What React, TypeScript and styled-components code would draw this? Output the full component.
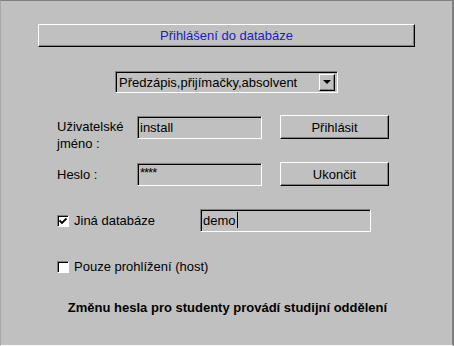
import React from "react";
import styled, { createGlobalStyle, css } from "styled-components";

const GlobalStyle = createGlobalStyle`
  html, body {
    margin: 0;
    padding: 0;
    background: #c0c0c0;
  }
  body {
    font-family: "Liberation Sans", Arial, sans-serif;
    font-size: 13px;
    color: #000;
  }
`;

const raised = css`
  border-top: 1px solid #ffffff;
  border-left: 1px solid #ffffff;
  border-right: 1px solid #000000;
  border-bottom: 1px solid #000000;
  box-shadow: inset -1px -1px 0 #808080;
`;

const sunken = css`
  border-top: 1px solid #808080;
  border-left: 1px solid #808080;
  border-right: 1px solid #ffffff;
  border-bottom: 1px solid #ffffff;
  box-shadow: inset 1px 1px 0 #000000;
`;

const Window = styled.div`
  width: 454px;
  height: 346px;
  box-sizing: border-box;
  background: #c0c0c0;
  border-top: 1px solid #808080;
  border-left: 1px solid #a8a8a8;
  border-right: 2px solid #808080;
  border-bottom: 1px solid #ffffff;
  display: flex;
  flex-direction: column;
`;

const TitleBar = styled.div`
  ${raised};
  box-sizing: border-box;
  margin: 23px 37px 0 37px;
  height: 23px;
  display: flex;
  align-items: center;
  justify-content: center;
  color: #2020c0;
`;

const Select = styled.div`
  ${sunken};
  box-sizing: border-box;
  align-self: center;
  margin-top: 24px;
  width: 223px;
  height: 22px;
  display: flex;
  align-items: center;
  padding: 0 2px 0 3px;
`;

const SelectText = styled.span`
  flex: 1;
`;

const ArrowButton = styled.div`
  ${raised};
  box-sizing: border-box;
  width: 16px;
  height: 17px;
  display: flex;
  align-items: center;
  justify-content: center;
`;

const Arrow = styled.div`
  width: 0;
  height: 0;
  border-left: 4px solid transparent;
  border-right: 4px solid transparent;
  border-top: 4px solid #000;
`;

const FormRow = styled.div<{ $top: number }>`
  display: flex;
  align-items: flex-start;
  margin-top: ${(p) => p.$top}px;
  padding-left: 56px;
  height: 23px;
`;

const Label = styled.div<{ $center?: boolean }>`
  width: 80px;
  line-height: 17px;
  padding-top: ${(p) => (p.$center ? 3 : 2)}px;
`;

const TextField = styled.div<{ $width: number }>`
  ${sunken};
  box-sizing: border-box;
  width: ${(p) => p.$width}px;
  height: 23px;
  padding: 2px 0 0 2px;
  line-height: 17px;
  white-space: nowrap;
`;

const Stars = styled.span`
  position: relative;
  top: -2px;
  letter-spacing: -1px;
`;

const Caret = styled.span`
  display: inline-block;
  width: 1px;
  height: 16px;
  background: #000;
  vertical-align: top;
  margin-left: 1px;
`;

const Button = styled.div`
  ${raised};
  box-sizing: border-box;
  margin-left: 18px;
  margin-top: -1px;
  width: 109px;
  height: 24px;
  display: flex;
  align-items: center;
  justify-content: center;
`;

const CheckRow = styled.div<{ $top: number }>`
  display: flex;
  align-items: center;
  margin-top: ${(p) => p.$top}px;
  padding-left: 56px;
  height: 23px;
`;

const CheckBox = styled.div`
  ${sunken};
  box-sizing: border-box;
  width: 12px;
  height: 12px;
  background: #fff;
  display: flex;
  align-items: center;
  justify-content: center;
  margin-right: 5px;
`;

const CheckLabel = styled.span<{ $width?: number }>`
  width: ${(p) => (p.$width ? `${p.$width}px` : "auto")};
`;

const Note = styled.div`
  margin-top: 22px;
  text-align: center;
  font-weight: bold;
  padding-left: 2px;
`;

const Check = () => (
  <svg width="8" height="8" viewBox="0 0 8 8">
    <path d="M0.5 3.5 L3 6 L7.5 1.5" stroke="#000" strokeWidth="1.8" fill="none" />
  </svg>
);

const App = () => {
  return (
    <>
      <GlobalStyle />
      <Window>
        <TitleBar>Přihlášení do databáze</TitleBar>
        <Select>
          <SelectText>Předzápis,přijímačky,absolvent</SelectText>
          <ArrowButton>
            <Arrow />
          </ArrowButton>
        </Select>
        <FormRow $top={23}>
          <Label>
            Uživatelské
            <br />
            jméno :
          </Label>
          <TextField $width={125}>install</TextField>
          <Button>Přihlásit</Button>
        </FormRow>
        <FormRow $top={24}>
          <Label $center>Heslo :</Label>
          <TextField $width={125}>
            <Stars>****</Stars>
          </TextField>
          <Button>Ukončit</Button>
        </FormRow>
        <CheckRow $top={23}>
          <CheckBox>
            <Check />
          </CheckBox>
          <CheckLabel $width={126}>Jiná databáze</CheckLabel>
          <TextField $width={171}>
            demo
            <Caret />
          </TextField>
        </CheckRow>
        <CheckRow $top={23}>
          <CheckBox />
          <CheckLabel>Pouze prohlížení (host)</CheckLabel>
        </CheckRow>
        <Note>Změnu hesla pro studenty provádí studijní oddělení</Note>
      </Window>
    </>
  );
};

export default App;
